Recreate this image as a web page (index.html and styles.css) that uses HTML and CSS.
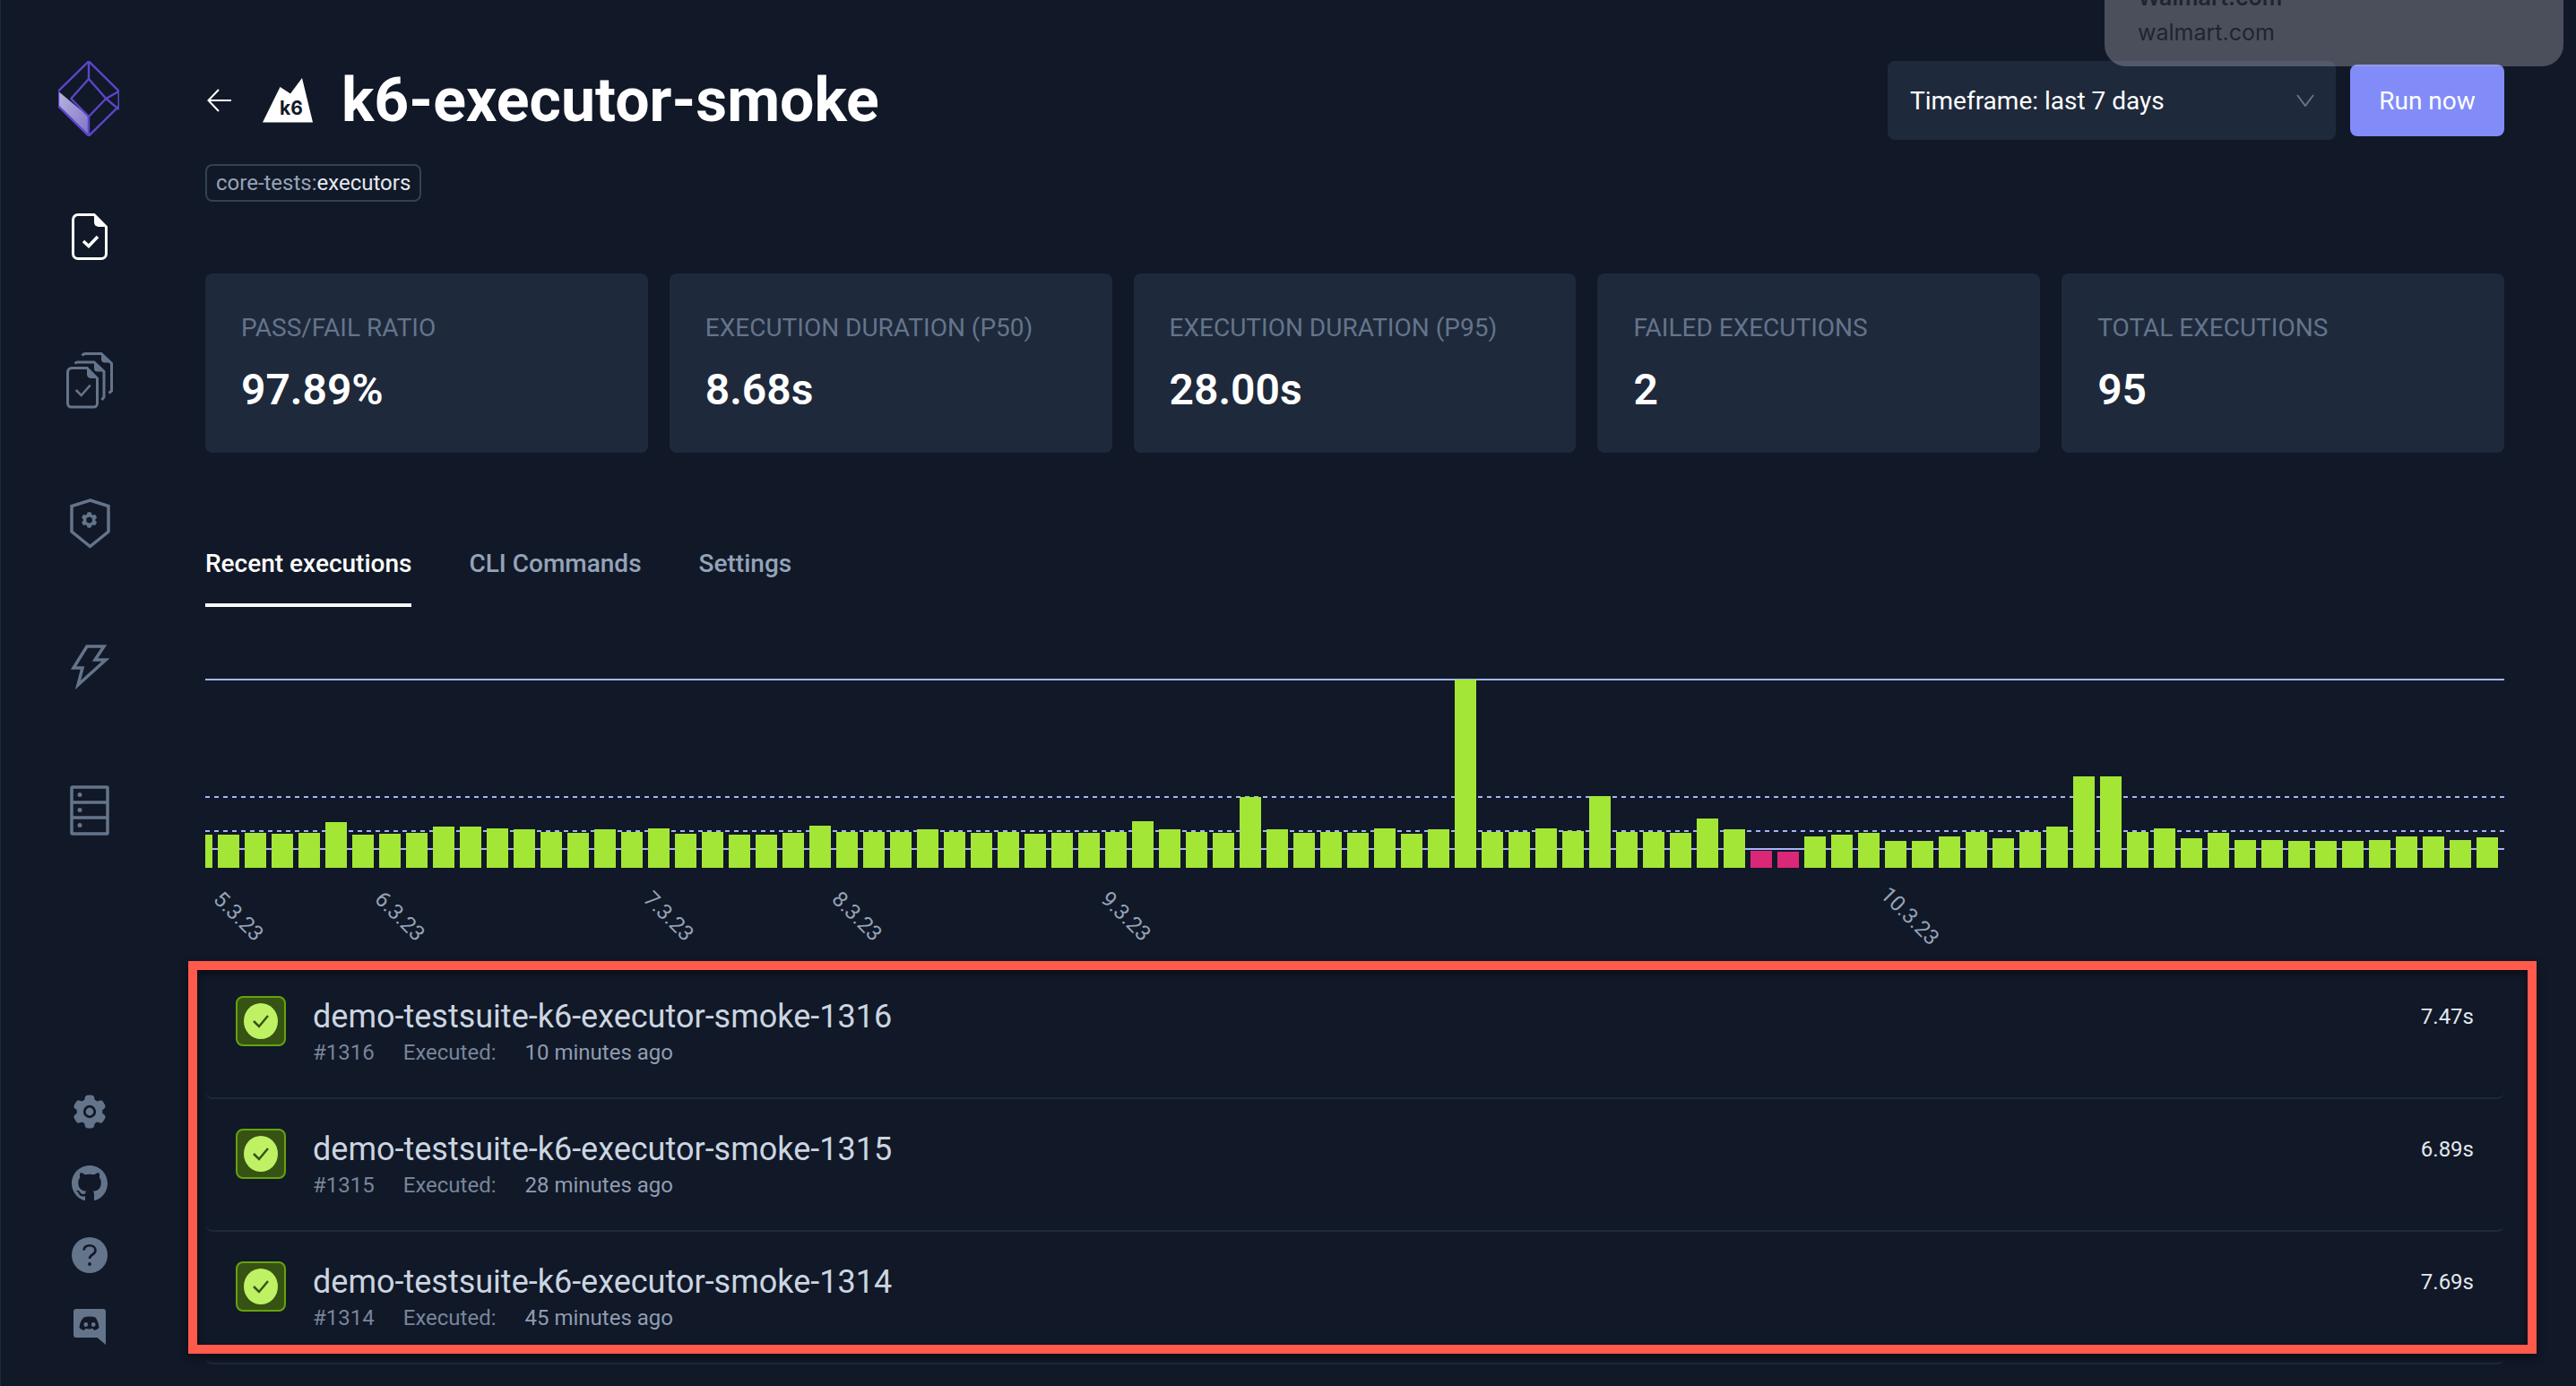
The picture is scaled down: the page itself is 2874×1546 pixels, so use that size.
FILE: index.html
```html
<!DOCTYPE html>
<html lang="en">
<head>
  <meta charset="UTF-8" />
  <title>k6-executor-smoke</title>
  <link rel="stylesheet" href="styles.css">
</head>
<body>
  <nav class="sidebar">
    <svg class="logo" width="68" height="84" viewBox="15 8 68 84">
      <defs>
        <linearGradient id="face" x1="0" y1="0" x2="1" y2="1">
          <stop offset="0" stop-color="#b9b5de" />
          <stop offset="1" stop-color="#7e73c8" />
        </linearGradient>
      </defs>
      <path d="M15 41.7 49 70v21.7L15 58.3z" fill="url(#face)" />
      <g fill="none" stroke="#5b46c9" stroke-width="2.4" stroke-linejoin="round">
        <path d="M49 8.3 82.7 41.7v16.6L49 91.7 15 58.3V41.7z" />
        <path d="M49 8.3V28L68.3 50 49 70 29.3 50 49 28" />
        <path d="M82.7 41.7 68.3 50l14.4 12M49 70v21.7" />
      </g>
    </svg>
    <div class="nav-top">
      <a class="nav-item">
        <svg width="40" height="52" viewBox="0 0 40 52">
          <path d="M7 1.500h18L38.500 15v30a5.500 5.500 0 0 1-5.500 5.500H7A5.500 5.500 0 0 1 1.500 45V7A5.500 5.500 0 0 1 7 1.500z" fill="none" stroke="#fff" stroke-width="3" />
          <path d="M25 1.500 38.500 15H30a5 5 0 0 1-5-5z" fill="#fff" />
          <path d="M13 31l6 5.500L29 26" fill="none" stroke="#fff" stroke-width="3.500" />
        </svg>
      </a>
      <a class="nav-item">
        <svg width="52" height="63" viewBox="0 0 52 63" fill="none" stroke="#64748b" stroke-width="3">
          <path d="M17.500 3.500c1-1 2-2 3.500-2h18l11.500 11V43l-3 2.500" />
          <path d="M39 1.500v6a4 4 0 0 0 4 4h7z" fill="#64748b" stroke="none" />
          <path d="M9.500 12.500c1-1 2-1.500 3-1.500H31l11 10.500V50l-2.500 3" />
          <path d="M31 11v7a3.500 3.500 0 0 0 3.500 3.500H42z" fill="#64748b" stroke="none" />
          <path d="M6 17.500h17L34.500 29v28a4 4 0 0 1-4 4h-25a4 4 0 0 1-4-4V22A4.500 4.500 0 0 1 6 17.500z" fill="#111827" />
          <path d="M23 17.500v7a4.500 4.500 0 0 0 4.500 4.500H35z" fill="#64748b" stroke="none" />
          <path d="M10.700 42l6 6 10-11.400" stroke-width="2.500" />
        </svg>
      </a>
      <a class="nav-item">
        <svg width="45" height="56" viewBox="0 0 45 56">
          <path d="M22.500 2 43 8.500V37L22.500 53.500 2 37V8.500z" fill="none" stroke="#64748b" stroke-width="3.500" />
          <path transform="translate(10.800 13.200) scale(.9)" fill="#64748b" fill-rule="evenodd" d="M11.078 2.250c-.917 0-1.699.663-1.850 1.567L9.050 4.889c-.020.120-.115.260-.297.348a7.493 7.493 0 00-.986.570c-.166.115-.334.126-.450.083L6.300 5.508a1.875 1.875 0 00-2.282.819l-.922 1.597a1.875 1.875 0 00.432 2.385l.840.692c.095.078.170.229.154.430a7.598 7.598 0 000 1.139c.015.200-.059.352-.153.430l-.841.692a1.875 1.875 0 00-.432 2.385l.922 1.597a1.875 1.875 0 002.282.818l1.019-.382c.115-.043.283-.031.450.082.312.214.641.405.985.570.182.088.277.228.297.350l.178 1.071c.151.904.933 1.567 1.850 1.567h1.844c.916 0 1.699-.663 1.850-1.567l.178-1.072c.020-.120.114-.260.297-.349.344-.165.673-.356.985-.570.167-.114.335-.125.450-.082l1.020.382a1.875 1.875 0 002.280-.819l.923-1.597a1.875 1.875 0 00-.432-2.385l-.840-.692c-.095-.078-.170-.229-.154-.430a7.614 7.614 0 000-1.139c-.016-.200.059-.352.153-.430l.840-.692c.708-.582.891-1.590.433-2.385l-.922-1.597a1.875 1.875 0 00-2.282-.818l-1.020.382c-.114.043-.282.031-.449-.083a7.490 7.490 0 00-.985-.570c-.183-.087-.277-.227-.297-.348l-.179-1.072a1.875 1.875 0 00-1.850-1.567h-1.843zM12 15.750a3.750 3.750 0 100-7.500 3.750 3.750 0 000 7.500z" />
        </svg>
      </a>
      <a class="nav-item">
        <svg width="43" height="51" viewBox="0 0 43 51">
          <path d="M18 2h19L27 17h12L8 45l5-19H3z" fill="none" stroke="#64748b" stroke-width="3.500" />
        </svg>
      </a>
      <a class="nav-item">
        <svg width="44" height="56" viewBox="0 0 44 56">
          <rect x="2" y="2" width="40" height="52" rx="1" fill="none" stroke="#64748b" stroke-width="3.500" />
          <path d="M2 19h40M2 36h40" stroke="#64748b" stroke-width="3.500" />
          <circle cx="11" cy="10.500" r="2.500" fill="#64748b" />
          <circle cx="11" cy="27.500" r="2.500" fill="#64748b" />
          <circle cx="11" cy="44.500" r="2.500" fill="#64748b" />
        </svg>
      </a>
    </div>
    <div class="nav-bottom">
      <svg width="40" height="40" viewBox="1.500 1.500 21 21" fill="#64748b">
        <path fill-rule="evenodd" d="M11.078 2.250c-.917 0-1.699.663-1.850 1.567L9.050 4.889c-.020.120-.115.260-.297.348a7.493 7.493 0 00-.986.570c-.166.115-.334.126-.450.083L6.300 5.508a1.875 1.875 0 00-2.282.819l-.922 1.597a1.875 1.875 0 00.432 2.385l.840.692c.095.078.170.229.154.430a7.598 7.598 0 000 1.139c.015.200-.059.352-.153.430l-.841.692a1.875 1.875 0 00-.432 2.385l.922 1.597a1.875 1.875 0 002.282.818l1.019-.382c.115-.043.283-.031.450.082.312.214.641.405.985.570.182.088.277.228.297.350l.178 1.071c.151.904.933 1.567 1.850 1.567h1.844c.916 0 1.699-.663 1.850-1.567l.178-1.072c.020-.120.114-.260.297-.349.344-.165.673-.356.985-.570.167-.114.335-.125.450-.082l1.020.382a1.875 1.875 0 002.280-.819l.923-1.597a1.875 1.875 0 00-.432-2.385l-.840-.692c-.095-.078-.170-.229-.154-.430a7.614 7.614 0 000-1.139c-.016-.200.059-.352.153-.430l.840-.692c.708-.582.891-1.590.433-2.385l-.922-1.597a1.875 1.875 0 00-2.282-.818l-1.020.382c-.114.043-.282.031-.449-.083a7.490 7.490 0 00-.985-.570c-.183-.087-.277-.227-.297-.348l-.179-1.072a1.875 1.875 0 00-1.850-1.567h-1.843zM12 15.750a3.750 3.750 0 100-7.500 3.750 3.750 0 000 7.500z" />
        <circle cx="12" cy="12" r="2.300" />
      </svg>
      <svg width="40" height="40" viewBox="0 0 16 16" fill="#64748b">
        <path d="M8 0C3.580 0 0 3.580 0 8c0 3.540 2.290 6.530 5.470 7.590.400.070.550-.170.550-.380 0-.190-.010-.820-.010-1.490-2.010.370-2.530-.490-2.690-.940-.090-.230-.480-.940-.820-1.130-.280-.150-.680-.520-.010-.530.630-.010 1.080.580 1.230.820.720 1.210 1.870.870 2.330.660.070-.520.280-.870.510-1.070-1.780-.200-3.640-.890-3.640-3.950 0-.870.310-1.590.820-2.150-.080-.200-.360-1.020.080-2.120 0 0 .670-.210 2.200.820.640-.180 1.320-.270 2-.270.680 0 1.360.090 2 .270 1.530-1.040 2.200-.820 2.200-.820.440 1.100.160 1.920.080 2.120.510.560.820 1.270.820 2.150 0 3.070-1.870 3.750-3.650 3.950.290.250.540.730.540 1.480 0 1.070-.010 1.930-.010 2.200 0 .210.150.460.550.380A8.013 8.013 0 0016 8c0-4.420-3.580-8-8-8z" />
      </svg>
      <svg width="40" height="40" viewBox="0 0 40 40">
        <circle cx="20" cy="20" r="20" fill="#64748b" />
        <path d="M13.500 14.500c.5-3.500 3.300-5.200 6.500-5.200 3.600 0 6.500 2 6.500 5.400 0 4.800-6.500 4.600-6.500 9.300" fill="none" stroke="#111827" stroke-width="2.600" />
        <circle cx="20" cy="30" r="1.900" fill="#111827" />
      </svg>
      <svg width="36" height="40" viewBox="0 0 36 40">
        <path d="M3 0h30a3 3 0 0 1 3 3v37l-9.500-8H3a3 3 0 0 1-3-3V3a3 3 0 0 1 3-3z" fill="#64748b" />
        <path d="M11.500 9.500c4-1.500 9-1.500 13 0 2 2.800 3.600 6.500 4 11.500-1.500 1.500-3.500 2.500-5.500 3l-1.500-2.200c-2.700.8-5.300.8-8 0L12 24c-2-.5-4-1.500-5.500-3 .4-5 2-8.700 5-11.500z" fill="#111827" />
        <circle cx="13.800" cy="17.500" r="2.400" fill="#64748b" />
        <circle cx="22.200" cy="17.500" r="2.400" fill="#64748b" />
      </svg>
    </div>
  </nav>

  <main class="page">
    <header class="page-head">
      <div>
        <div class="title-row">
          <svg class="back-arrow" width="27" height="26" viewBox="0 0 27 26" fill="none" stroke="#fff" stroke-width="2">
            <path d="M13 1 1.500 13 13 25M1.500 13H27" />
          </svg>
          <svg class="k6-logo" width="56" height="50" viewBox="0 0 56 50">
            <path d="M0 49.500 19.500 10 31 17.500 44 0l12 49.500z" fill="#fff" />
            <text x="19" y="41" class="k6-mark">k6</text>
          </svg>
          <h1>k6-executor-smoke</h1>
        </div>
        <span class="tag">core-tests:<b>executors</b></span>
      </div>
      <div class="actions">
        <div class="timeframe">
          <span>Timeframe: last 7 days</span>
          <svg width="20" height="14" viewBox="0 0 20 14" fill="none" stroke="#64748b" stroke-width="2">
            <path d="M1 1l9 12 9-12" />
          </svg>
        </div>
        <button class="run-btn">Run now</button>
      </div>
    </header>

    <section class="metrics">
      <div class="metric"><div class="metric-label">PASS/FAIL RATIO</div><div class="metric-value">97.89%</div></div>
      <div class="metric"><div class="metric-label">EXECUTION DURATION (P50)</div><div class="metric-value">8.68s</div></div>
      <div class="metric"><div class="metric-label">EXECUTION DURATION (P95)</div><div class="metric-value">28.00s</div></div>
      <div class="metric"><div class="metric-label">FAILED EXECUTIONS</div><div class="metric-value">2</div></div>
      <div class="metric"><div class="metric-label">TOTAL EXECUTIONS</div><div class="metric-value">95</div></div>
    </section>

    <div class="tabs">
      <a class="tab active">Recent executions</a>
      <a class="tab">CLI Commands</a>
      <a class="tab">Settings</a>
    </div>

    <section class="chart">
      <div class="plot">
        <i class="guide guide-solid guide-max"></i>
        <i class="guide guide-dashed guide-p95"></i>
        <i class="guide guide-dashed guide-p50"></i>
        <i class="guide guide-solid guide-min"></i>
        <div class="bars">
          <div class="bar" style="height:37px"></div>
          <div class="bar" style="height:37px"></div><div class="bar" style="height:39px"></div><div class="bar" style="height:38px"></div><div class="bar" style="height:39px"></div><div class="bar" style="height:51px"></div>
          <div class="bar" style="height:37px"></div><div class="bar" style="height:38px"></div><div class="bar" style="height:39px"></div><div class="bar" style="height:46px"></div><div class="bar" style="height:46px"></div>
          <div class="bar" style="height:44px"></div><div class="bar" style="height:43px"></div><div class="bar" style="height:40px"></div><div class="bar" style="height:39px"></div><div class="bar" style="height:43px"></div>
          <div class="bar" style="height:40px"></div><div class="bar" style="height:44px"></div><div class="bar" style="height:38px"></div><div class="bar" style="height:40px"></div><div class="bar" style="height:37px"></div>
          <div class="bar" style="height:37px"></div><div class="bar" style="height:39px"></div><div class="bar" style="height:47px"></div><div class="bar" style="height:40px"></div><div class="bar" style="height:40px"></div>
          <div class="bar" style="height:40px"></div><div class="bar" style="height:43px"></div><div class="bar" style="height:40px"></div><div class="bar" style="height:39px"></div>
          <div class="bar" style="height:40px"></div><div class="bar" style="height:38px"></div><div class="bar" style="height:39px"></div><div class="bar" style="height:39px"></div><div class="bar" style="height:40px"></div>
          <div class="bar" style="height:52px"></div><div class="bar" style="height:43px"></div><div class="bar" style="height:40px"></div><div class="bar" style="height:39px"></div><div class="bar" style="height:79px"></div>
          <div class="bar" style="height:43px"></div><div class="bar" style="height:39px"></div><div class="bar" style="height:40px"></div><div class="bar" style="height:39px"></div><div class="bar" style="height:44px"></div>
          <div class="bar" style="height:38px"></div><div class="bar" style="height:43px"></div><div class="bar" style="height:210px"></div><div class="bar" style="height:40px"></div><div class="bar" style="height:40px"></div>
          <div class="bar" style="height:44px"></div><div class="bar" style="height:41px"></div><div class="bar" style="height:80px"></div><div class="bar" style="height:40px"></div><div class="bar" style="height:40px"></div>
          <div class="bar" style="height:39px"></div><div class="bar" style="height:55px"></div><div class="bar" style="height:43px"></div><div class="bar bar-failed" style="height:19px"></div><div class="bar bar-failed" style="height:18px"></div>
          <div class="bar" style="height:35px"></div><div class="bar" style="height:37px"></div><div class="bar" style="height:39px"></div><div class="bar" style="height:30px"></div><div class="bar" style="height:30px"></div>
          <div class="bar" style="height:35px"></div><div class="bar" style="height:40px"></div><div class="bar" style="height:33px"></div><div class="bar" style="height:40px"></div><div class="bar" style="height:46px"></div>
          <div class="bar" style="height:102px"></div><div class="bar" style="height:102px"></div><div class="bar" style="height:40px"></div><div class="bar" style="height:44px"></div><div class="bar" style="height:33px"></div>
          <div class="bar" style="height:39px"></div><div class="bar" style="height:31px"></div><div class="bar" style="height:31px"></div><div class="bar" style="height:30px"></div><div class="bar" style="height:30px"></div>
          <div class="bar" style="height:30px"></div><div class="bar" style="height:31px"></div><div class="bar" style="height:35px"></div><div class="bar" style="height:35px"></div><div class="bar" style="height:31px"></div>
          <div class="bar" style="height:34px"></div>
        </div>
      </div>
      <div class="axis">
        <span class="tick" style="left:22px">5.3.23</span>
        <span class="tick" style="left:202px">6.3.23</span>
        <span class="tick" style="left:502px">7.3.23</span>
        <span class="tick" style="left:712px">8.3.23</span>
        <span class="tick" style="left:1012px">9.3.23</span>
        <span class="tick" style="left:1882px;top:17px">10.3.23</span>
      </div>
    </section>

    <section class="executions">
      <div class="execution">
        <span class="status"><svg width="38" height="40" viewBox="0 0 38 40"><ellipse cx="19" cy="20" rx="19" ry="20" fill="#bef264" /><path d="M11 20l6 6 10-12" fill="none" stroke="#365314" stroke-width="2.500" /></svg></span>
        <div class="execution-body">
          <div class="execution-name">demo-testsuite-k6-executor-smoke-1316</div>
          <div class="execution-meta"><span>#1316</span><span>Executed:</span><span class="ago">10 minutes ago</span></div>
        </div>
        <div class="duration">7.47s</div>
      </div>
      <div class="execution">
        <span class="status"><svg width="38" height="40" viewBox="0 0 38 40"><ellipse cx="19" cy="20" rx="19" ry="20" fill="#bef264" /><path d="M11 20l6 6 10-12" fill="none" stroke="#365314" stroke-width="2.500" /></svg></span>
        <div class="execution-body">
          <div class="execution-name">demo-testsuite-k6-executor-smoke-1315</div>
          <div class="execution-meta"><span>#1315</span><span>Executed:</span><span class="ago">28 minutes ago</span></div>
        </div>
        <div class="duration">6.89s</div>
      </div>
      <div class="execution">
        <span class="status"><svg width="38" height="40" viewBox="0 0 38 40"><ellipse cx="19" cy="20" rx="19" ry="20" fill="#bef264" /><path d="M11 20l6 6 10-12" fill="none" stroke="#365314" stroke-width="2.500" /></svg></span>
        <div class="execution-body">
          <div class="execution-name">demo-testsuite-k6-executor-smoke-1314</div>
          <div class="execution-meta"><span>#1314</span><span>Executed:</span><span class="ago">45 minutes ago</span></div>
        </div>
        <div class="duration">7.69s</div>
      </div>
    </section>
  </main>

  <div class="link-tooltip">
    <div class="link-title">Walmart.com</div>
    <div class="link-url">walmart.com</div>
  </div>
  <div class="highlight"></div>
</body>
</html>
```

FILE: styles.css
```css
html, body {
  height: 1546px;
  overflow: hidden;
}

body {
  margin: 0;
  display: flex;
  background-color: #111827;
  color: #fff;
  font-family: Roboto, "Liberation Sans", sans-serif;
}

.sidebar {
  flex: 0 0 229px;
  box-sizing: border-box;
  height: 1546px;
  border-left: 1px solid #1e293b;
  display: flex;
  flex-direction: column;
  align-items: center;
  padding: 68px 30px 46px 0;
}

.logo {
  flex: none;
  margin-right: 2px;
}

.nav-top {
  display: flex;
  flex-direction: column;
  align-items: center;
  margin-top: 32px;
}

.nav-item {
  height: 160px;
  display: flex;
  align-items: center;
}

.nav-bottom {
  display: flex;
  flex-direction: column;
  align-items: center;
  margin-top: auto;
  gap: 40px;
}

.page {
  flex: 1;
  min-width: 0;
  padding: 68px 80px 0 0;
}

.page-head {
  display: flex;
  justify-content: space-between;
  align-items: flex-start;
}

.title-row {
  display: flex;
  align-items: center;
  height: 88px;
}

.back-arrow {
  margin-left: 2px;
}

.k6-logo {
  margin-left: 35px;
  margin-right: 32px;
}

.k6-mark {
  font-family: Inter, sans-serif;
  font-size: 21px;
  font-weight: 700;
  fill: #111827;
}

h1 {
  margin: 0;
  font-size: 68px;
  font-weight: 700;
  line-height: 88px;
}

.tag {
  display: inline-block;
  box-sizing: border-box;
  height: 42px;
  margin-top: 27px;
  padding: 0 10px;
  border: 2px solid #334155;
  border-radius: 8px;
  color: #94a3b8;
  font-size: 24px;
  line-height: 38px;
}

.tag b {
  font-weight: 400;
  color: #e2e8f0;
}

.actions {
  display: flex;
  align-items: center;
  gap: 16px;
}

.timeframe {
  box-sizing: border-box;
  width: 500px;
  height: 88px;
  padding: 0 24px 0 25px;
  display: flex;
  align-items: center;
  justify-content: space-between;
  background-color: #1e293b;
  border-radius: 8px;
  font-size: 28px;
}

.run-btn {
  width: 172px;
  height: 80px;
  border: none;
  border-radius: 8px;
  background-color: #818cf8;
  color: #fff;
  font-family: inherit;
  font-size: 28px;
  font-weight: 400;
}

.metrics {
  display: grid;
  grid-template-columns: repeat(5, 1fr);
  gap: 24px;
  margin-top: 80px;
}

.metric {
  box-sizing: border-box;
  height: 200px;
  padding: 41px 40px 0;
  background-color: #1e293b;
  border-radius: 8px;
}

.metric-label {
  color: #64748b;
  font-size: 28px;
  line-height: 40px;
}

.metric-value {
  margin-top: 19px;
  font-size: 48px;
  font-weight: 600;
  line-height: 60px;
}

.tabs {
  display: flex;
  gap: 64px;
  margin-top: 104px;
}

.tab {
  padding-bottom: 24px;
  border-bottom: 4px solid transparent;
  color: #94a3b8;
  font-size: 28px;
  font-weight: 500;
  line-height: 40px;
}

.tab.active {
  color: #fff;
  border-bottom-color: #fff;
}

.chart {
  margin-top: 80px;
}

.plot {
  position: relative;
  height: 211px;
  overflow: hidden;
}

.guide {
  position: absolute;
  left: 0;
  right: 0;
  height: 2px;
}

.guide-solid {
  background-color: #a5b4fc;
}

.guide-dashed {
  background: repeating-linear-gradient(90deg, #a5b4fc 0 5px, transparent 5px 10px);
}

.guide-max { top: 0; }
.guide-p95 { top: 131px; }
.guide-p50 { top: 169px; }
.guide-min { top: 189px; }

.bars {
  position: absolute;
  left: -16px;
  bottom: 0;
  display: flex;
  align-items: flex-end;
  gap: 6px;
}

.bar {
  flex: 0 0 24px;
  background-color: #a3e635;
}

.bar-failed {
  background-color: #db2777;
}

.axis {
  position: relative;
  height: 110px;
}

.tick {
  position: absolute;
  top: 22px;
  color: #94a3b8;
  font-size: 24px;
  line-height: 24px;
  transform: rotate(45deg);
  transform-origin: left top;
  white-space: nowrap;
}

.execution {
  box-sizing: border-box;
  height: 148px;
  padding: 32px 34px 0 34px;
  display: flex;
  align-items: flex-start;
  border-bottom: 2px solid #1e293b;
  border-radius: 8px;
}

.status {
  flex: none;
  box-sizing: border-box;
  width: 56px;
  height: 56px;
  margin-top: 1px;
  display: flex;
  align-items: center;
  justify-content: center;
  background-color: #365314;
  border: 2px solid #65a30d;
  border-radius: 8px;
}

.execution-body {
  flex: 1;
  margin-left: 30px;
}

.execution-name {
  color: #cbd5e1;
  font-size: 36px;
  line-height: 48px;
}

.execution-meta {
  display: flex;
  gap: 32px;
  color: #76859b;
  font-size: 24px;
  line-height: 32px;
}

.execution-meta .ago {
  color: #8e9cb2;
}

.duration {
  color: #e2e8f0;
  font-size: 24px;
  line-height: 48px;
}

.link-tooltip {
  position: absolute;
  left: 2348px;
  top: 0;
  box-sizing: border-box;
  width: 512px;
  height: 74px;
  padding: 0 37px 20px;
  display: flex;
  flex-direction: column;
  justify-content: flex-end;
  overflow: hidden;
  background-color: rgba(183, 184, 191, 0.35);
  border-radius: 0 0 24px 24px;
  color: #1f2430;
  font-family: Inter, sans-serif;
  font-size: 25px;
  line-height: 36px;
}

.link-title {
  font-weight: 600;
  flex: none;
}

.link-url {
  flex: none;
  margin-top: 3px;
}

.highlight {
  position: absolute;
  left: 210px;
  top: 1072px;
  box-sizing: border-box;
  width: 2620px;
  height: 438px;
  border: 10px solid #ff5a4c;
  box-shadow: 0 4px 10px rgba(0, 0, 0, 0.45), inset 0 4px 10px rgba(0, 0, 0, 0.45);
}
```
